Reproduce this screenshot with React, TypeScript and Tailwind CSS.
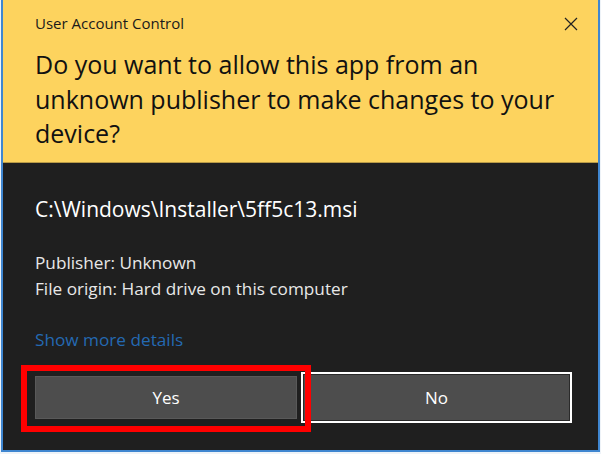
import React from "react";

const font = { fontFamily: '"Open Sans", "Noto Sans", sans-serif' };

export default function App() {
  return (
    <div className="relative w-[601px] h-[454px] bg-[#eef3f8]" style={font}>
      <div className="ml-[1px] w-[599px] h-[452px] border-l-2 border-r-2 border-b-2 border-[#3f86d0] bg-[#1f1f1f] flex flex-col">
        <div className="h-[163px] bg-[#fdd35e] border-b border-[#b89a47] pl-[32px] pr-[20px]">
          <div className="flex items-center justify-between pt-[13px] h-[33px]">
            <span className="text-[15px] leading-[20px] text-[#1a1a1a]">User Account Control</span>
            <svg width="14" height="14" viewBox="0 0 14 14" className="mt-[2px]">
              <path d="M1 1 L13 13 M13 1 L1 13" stroke="#222" strokeWidth="1.2" />
            </svg>
          </div>
          <div className="mt-[14px] text-[25px] leading-[34.5px] text-[#111]">
            Do you want to allow this app from an
            <br />
            unknown publisher to make changes to your
            <br />
            device?
          </div>
        </div>
        <div className="pl-[32px] pr-[26px] pt-[32px] flex flex-col">
          <div className="text-[21px] leading-[28px] text-white">C:\Windows\Installer\5ff5c13.msi</div>
          <div className="mt-[27px] text-[17.2px] leading-[26px] text-[#e8e8e8]">
            <div>Publisher: Unknown</div>
            <div>File origin: Hard drive on this computer</div>
          </div>
          <div className="mt-[25px] text-[17.2px] leading-[26px] text-[#2469b2]">Show more details</div>
          <div className="mt-[19px] flex items-center gap-[4px]">
            <div className="w-[262px] h-[43px] bg-[#4d4d4d] border border-[#595959] flex items-center justify-center text-[17px] text-white">
              Yes
            </div>
            <div className="w-[271px] h-[51px] border-2 border-white p-[1px] bg-[#2a2a2a]">
              <div className="w-full h-full bg-[#4d4d4d] flex items-center justify-center text-[17px] text-white">
                No
              </div>
            </div>
          </div>
        </div>
      </div>
      <div className="absolute left-[21px] top-[365px] w-[290px] h-[67px] border-[6px] border-[#ff0000]" />
    </div>
  );
}
